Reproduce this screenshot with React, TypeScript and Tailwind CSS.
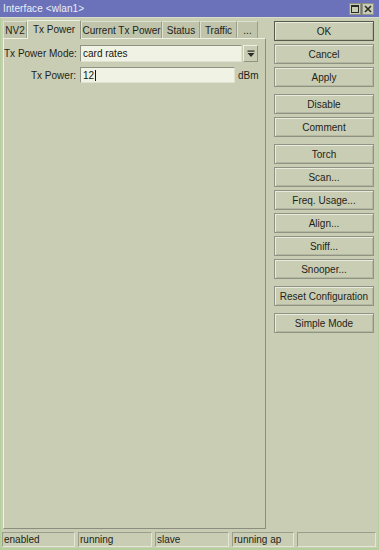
import React from 'react'

const tabs = [
  { label: 'NV2', w: 'w-[24px]' },
  { label: 'Tx Power', w: 'w-[54px]', active: true },
  { label: 'Current Tx Power', w: 'w-[81px]' },
  { label: 'Status', w: 'w-[38px]' },
  { label: 'Traffic', w: 'w-[37px]' },
  { label: '...', w: 'w-[21px]' },
]

const statusCells = [
  { label: 'enabled', w: 'w-[73px]' },
  { label: 'running', w: 'w-[74px]' },
  { label: 'slave', w: 'w-[74px]' },
  { label: 'running ap', w: 'w-[62px]' },
  { label: '', w: 'w-[79px]' },
]

// button groups, gap between groups is bigger
const groups = [
  { items: ['OK', 'Cancel', 'Apply'], mt: '' },
  { items: ['Disable', 'Comment'], mt: 'mt-[7px]' },
  { items: ['Torch', 'Scan...', 'Freq. Usage...', 'Align...', 'Sniff...', 'Snooper...'], mt: 'mt-[7px]' },
  { items: ['Reset Configuration'], mt: 'mt-[7px]' },
  { items: ['Simple Mode'], mt: 'mt-[7px]' },
]

const Btn = ({ label }: { label: string }) => (
  <div
    className={`h-[20px] flex items-center justify-center border ${
      label === 'OK' ? 'border-[#55594a]' : 'border-[#8f9383]'
    } shadow-[inset_1px_1px_0_#e9ecdc,inset_-1px_-1px_0_#b3b79f] text-[10px] text-[#1e1f1a] whitespace-nowrap`}
  >
    {label}
  </div>
)

const App = () => {
  return (
    <div className="w-[379px] h-[550px] bg-[#b3cf9b] flex flex-col font-['Liberation_Sans',Arial,sans-serif] select-none">
      {/* title bar */}
      <div className="h-[18px] bg-[#6b72b9] flex items-center pl-[3px] pr-[5px] border-b border-[#d9dcc9]">
        <span className="text-[10px] text-[#eceef8] tracking-[0.1px]">Interface &lt;wlan1&gt;</span>
        <div className="ml-auto flex gap-[1px]">
          <div className="w-[12px] h-[12px] bg-[#c9cdb3] border border-[#8f9383] flex items-center justify-center">
            <svg width="8" height="8" viewBox="0 0 8 8">
              <rect x="0.5" y="0.5" width="7" height="7" fill="none" stroke="#2a2b25" strokeWidth="1" />
              <rect x="0" y="0" width="8" height="2" fill="#2a2b25" />
            </svg>
          </div>
          <div className="w-[12px] h-[12px] bg-[#c9cdb3] border border-[#8f9383] flex items-center justify-center">
            <svg width="8" height="8" viewBox="0 0 8 8">
              <path d="M1 1 L7 7 M7 1 L1 7" stroke="#2a2b25" strokeWidth="1.6" />
            </svg>
          </div>
        </div>
      </div>

      {/* body */}
      <div className="flex-1 bg-[#c9cdb3] ml-[1px] mr-[1px] mb-[2px] flex flex-col">
        <div className="flex-1 flex">
          {/* left: tabs + panel */}
          <div className="w-[263px] ml-[2px] mt-[1px] flex flex-col">
            <div className="flex items-end h-[19px] relative z-10">
              {tabs.map((t) => (
                <div
                  key={t.label}
                  className={`${t.w} flex items-center justify-center text-[10px] text-[#1e1f1a] whitespace-nowrap border-t border-l border-r ${
                    t.active
                      ? 'h-[19px] bg-[#c9cdb3] border-t-[#eef0e2] border-l-[#eef0e2] border-r-[#8f9383] -mb-[1px] pb-[1px]'
                      : 'h-[17px] bg-[#c0c4aa] border-t-[#dde0cf] border-l-[#dde0cf] border-r-[#9a9e8c]'
                  }`}
                >
                  {t.label}
                </div>
              ))}
            </div>
            <div className="flex-1 border border-t-[#eef0e2] border-l-[#eef0e2] border-r-[#8b8e7e] border-b-[#8b8e7e] pt-[6px]">
              <div className="flex items-center h-[17px]">
                <div className="w-[72px] text-right text-[10px] text-[#1e1f1a] whitespace-nowrap">Tx Power Mode:</div>
                <div className="ml-[4px] w-[162px] h-[17px] bg-[#f0f3e4] border border-t-[#8f9383] border-l-[#8f9383] border-r-[#dfe2d1] border-b-[#dfe2d1] flex items-center pl-[2px] text-[10px] text-[#141510]">
                  card rates
                </div>
                <div className="ml-[1px] w-[15px] h-[17px] border border-t-[#eef0e2] border-l-[#eef0e2] border-r-[#8f9383] border-b-[#8f9383] flex items-center justify-center">
                  <svg width="8" height="8" viewBox="0 0 8 8">
                    <rect x="0.5" y="0.5" width="7" height="1.2" fill="#2a2b25" />
                    <path d="M0.5 3 L7.5 3 L4 7 Z" fill="#2a2b25" />
                  </svg>
                </div>
              </div>
              <div className="flex items-center h-[16px] mt-[5px]">
                <div className="w-[72px] text-right text-[10px] text-[#1e1f1a] whitespace-nowrap">Tx Power:</div>
                <div className="ml-[4px] w-[155px] h-[16px] bg-[#f0f3e4] border border-t-[#8f9383] border-l-[#8f9383] border-r-[#dfe2d1] border-b-[#dfe2d1] flex items-center pl-[2px] text-[10px] text-[#141510]">
                  12<span className="w-[1px] h-[11px] bg-[#141510] ml-[1px]" />
                </div>
                <div className="ml-[3px] text-[10px] text-[#1e1f1a]">dBm</div>
              </div>
            </div>
          </div>

          {/* right: buttons */}
          <div className="w-[100px] ml-[8px] pt-[3px] flex flex-col">
            {groups.map((g, gi) => (
              <div key={gi} className={`flex flex-col gap-[3px] ${g.mt}`}>
                {g.items.map((b) => (
                  <Btn key={b} label={b} />
                ))}
              </div>
            ))}
          </div>
        </div>

        {/* status bar */}
        <div className="flex gap-[3px] mt-[3px] ml-[1px] mb-[1px] h-[15px]">
          {statusCells.map((c, i) => (
            <div
              key={i}
              className={`${c.w} h-[15px] border border-t-[#9a9e8c] border-l-[#9a9e8c] border-r-[#e4e7d6] border-b-[#e4e7d6] flex items-center pl-[1px] text-[10px] text-[#1e1f1a]`}
            >
              {c.label}
            </div>
          ))}
        </div>
      </div>
    </div>
  )
}

export default App
